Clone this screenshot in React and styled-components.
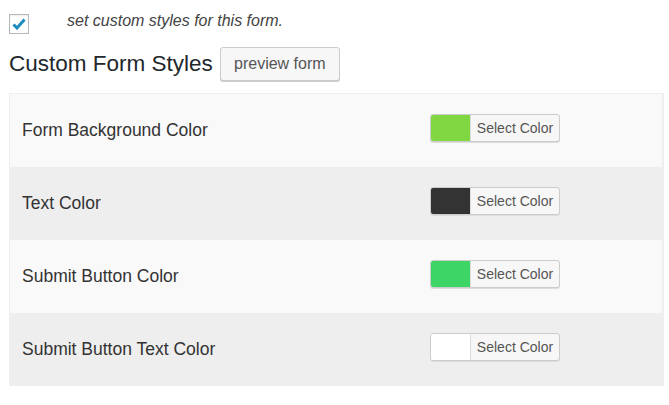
import React from 'react';
import styled, { createGlobalStyle } from 'styled-components';

const GlobalStyle = createGlobalStyle`
  body {
    margin: 0;
    background: #fff;
    font-family: "Liberation Sans", Arial, sans-serif;
    color: #333;
  }
`;

const Page = styled.div`
  padding: 14px 5px 0 9px;
`;

const OptionRow = styled.label`
  display: flex;
  align-items: center;
  height: 20px;
  gap: 38px;
  font-size: 16px;
  font-style: italic;
  color: #444;
`;

const CheckBox = styled.span`
  box-sizing: border-box;
  width: 20px;
  height: 20px;
  border: 1px solid #b4b9be;
  background: #fff;
  display: flex;
  align-items: center;
  justify-content: center;
  box-shadow: inset 0 1px 2px rgba(0, 0, 0, 0.07);
`;

const OptionText = styled.span`
  margin-top: -7px;
`;

const TitleRow = styled.div`
  display: flex;
  align-items: center;
  gap: 7px;
  margin-top: 13px;
  height: 34px;
`;

const Title = styled.h2`
  margin: 0;
  font-size: 22.5px;
  font-weight: 400;
  color: #23282d;
`;

const Button = styled.button`
  box-sizing: border-box;
  width: 120px;
  height: 34px;
  padding: 0;
  font-family: inherit;
  font-size: 16px;
  color: #555;
  background: #f7f7f7;
  border: 1px solid #ccc;
  border-radius: 3px;
  box-shadow: 0 1px 0 #ccc;
`;

const Table = styled.div`
  margin-top: 12px;
  border-top: 1px solid #eee;
  border-left: 1px solid #eee;
`;

const Row = styled.div`
  display: grid;
  grid-template-columns: 420px 1fr;
  align-items: center;
  height: 73px;
  background: ${(p) => (p.$alt ? '#eee' : '#f9f9f9')};
  border-right: 2px solid #eee;
`;

const Label = styled.div`
  padding-left: 12px;
  font-size: 17.5px;
  color: #333;
`;

const Picker = styled.div`
  box-sizing: border-box;
  display: flex;
  width: 130px;
  height: 28px;
  margin-bottom: 6px;
  border: 1px solid #ccc;
  border-radius: 3px;
  overflow: hidden;
  background: #f7f7f7;
  box-shadow: 0 1px 0 #ddd;
`;

const Swatch = styled.span`
  width: 39px;
  background: ${(p) => p.$color};
  border-right: 1px solid #ddd;
`;

const PickerText = styled.span`
  flex: 1;
  display: flex;
  align-items: center;
  justify-content: center;
  font-size: 14px;
  color: #555;
`;

const rows = [
  { label: 'Form Background Color', color: '#81d742' },
  { label: 'Text Color', color: '#333333' },
  { label: 'Submit Button Color', color: '#3dd566' },
  { label: 'Submit Button Text Color', color: '#ffffff' },
];

export default function App() {
  return (
    <>
      <GlobalStyle />
      <Page>
        <OptionRow>
          <CheckBox>
            <svg width="14" height="12" viewBox="0 0 14 12">
              <path d="M1.5 6.5 L5 10 L12.5 1.5" fill="none" stroke="#1e8cbe" strokeWidth="3" />
            </svg>
          </CheckBox>
          <OptionText>set custom styles for this form.</OptionText>
        </OptionRow>
        <TitleRow>
          <Title>Custom Form Styles</Title>
          <Button>preview form</Button>
        </TitleRow>
        <Table>
          {rows.map((r, i) => (
            <Row key={r.label} $alt={i % 2 === 1}>
              <Label>{r.label}</Label>
              <Picker>
                <Swatch $color={r.color} />
                <PickerText>Select Color</PickerText>
              </Picker>
            </Row>
          ))}
        </Table>
      </Page>
    </>
  );
}
